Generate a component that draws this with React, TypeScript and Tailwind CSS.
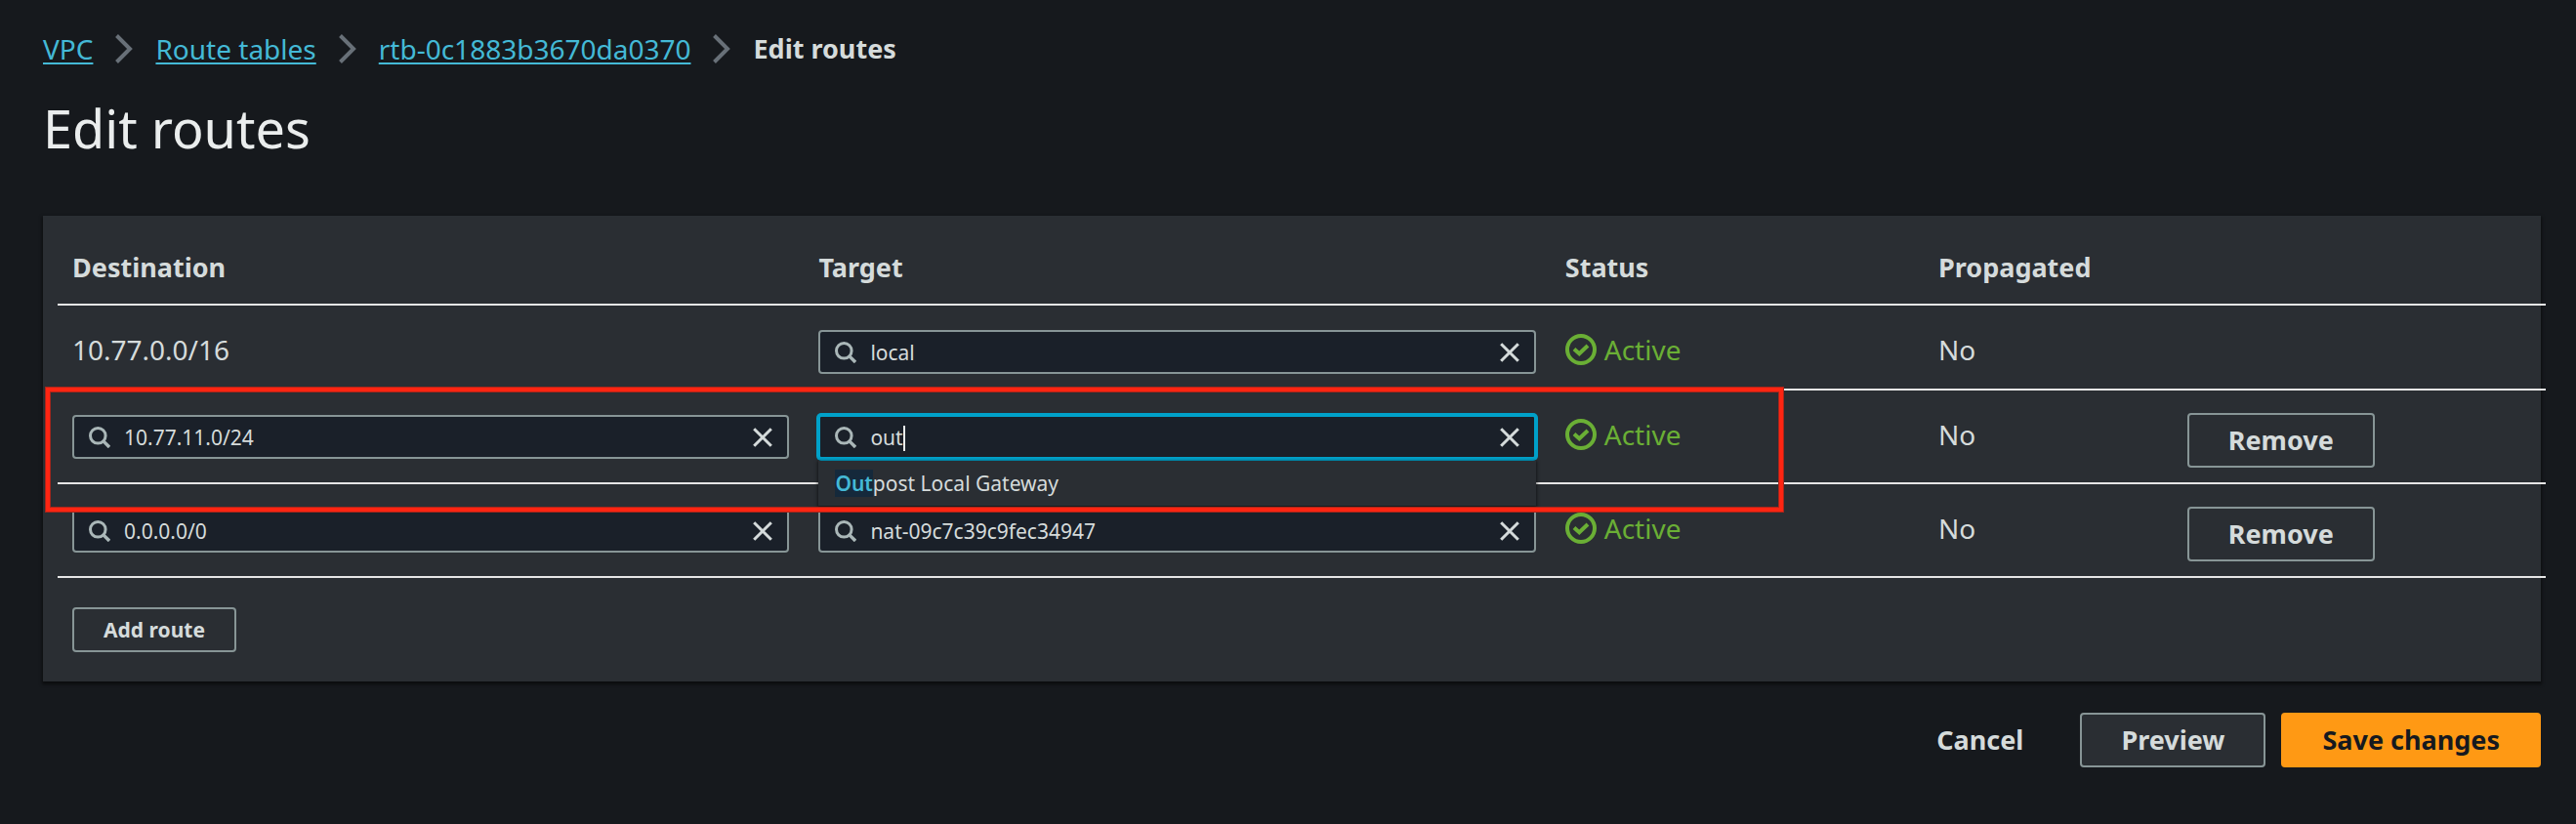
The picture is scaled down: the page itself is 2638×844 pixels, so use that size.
import { useState } from "react";

interface Route {
    id: string;
    destination: string;
    target: string;
    status: string;
    propagated: string;
    fixed?: boolean;
}

const initialRoutes: Route[] = [
    { id: "local", destination: "10.77.0.0/16", target: "local", status: "Active", propagated: "No", fixed: true },
    { id: "outpost", destination: "10.77.11.0/24", target: "out", status: "Active", propagated: "No" },
    { id: "nat", destination: "0.0.0.0/0", target: "nat-09c7c39c9fec34947", status: "Active", propagated: "No" },
];

const crumbs = ["VPC", "Route tables", "rtb-0c1883b3670da0370"];

function ChevronIcon() {
    return (
        <svg className="w-[18px] h-[30px] shrink-0" viewBox="0 0 18 30" fill="none" stroke="#687078" strokeWidth="4" aria-hidden="true">
            <path d="M1.5 1.5L15 15L1.5 28.5" />
        </svg>
    );
}

function SearchIcon() {
    return (
        <svg className="w-[22px] h-[22px] shrink-0" viewBox="0 0 22 22" fill="none" stroke="#aab7b8" strokeWidth="3" aria-hidden="true">
            <circle cx="9.3" cy="9.3" r="7.8" />
            <path d="M14.6 14.6L21 21" strokeWidth="3.4" />
        </svg>
    );
}

function CloseIcon() {
    return (
        <svg className="w-5 h-5" viewBox="0 0 20 20" fill="none" stroke="#d5dbdb" strokeWidth="3" aria-hidden="true">
            <path d="M1.2 1.2L18.8 18.8M18.8 1.2L1.2 18.8" />
        </svg>
    );
}

function CheckIcon() {
    return (
        <svg className="w-8 h-8 shrink-0" viewBox="0 0 32 32" fill="none" stroke="currentColor" strokeWidth="4" aria-hidden="true">
            <circle cx="16" cy="16" r="14" />
            <path d="M9 15.5L14.3 20.3L23 12" />
        </svg>
    );
}

interface SearchBoxProps {
    label: string;
    value: string;
    active?: boolean;
    onChange: (value: string) => void;
}

function SearchBox({ label, value, active, onChange }: SearchBoxProps) {
    return (
        <div
            className={
                active
                    ? "relative flex items-center h-[45px] px-[15px] gap-[14px] rounded-[3px] border-2 border-[#00a1c9] ring-2 ring-[#00a1c9] bg-[#1a2029]"
                    : "relative flex items-center h-[45px] px-[15px] gap-[14px] rounded-[4px] border-2 border-[#879596] bg-[#1a2029]"
            }
        >
            <SearchIcon />
            <input
                type="text"
                aria-label={label}
                value={value}
                onChange={(e) => onChange(e.target.value)}
                className="flex-1 min-w-0 bg-transparent text-[21px] leading-8 text-[#d5dbdb] outline-none"
            />
            {active && <span className="absolute left-[85px] top-[9px] w-[2px] h-[26px] bg-[#eaeded]"></span>}
            <button type="button" aria-label={`Clear ${label}`} onClick={() => onChange("")}>
                <CloseIcon />
            </button>
        </div>
    );
}

export default function App() {
    const [routes, setRoutes] = useState<Route[]>(initialRoutes);

    const updateRoute = (id: string, changes: Partial<Route>) => {
        setRoutes(routes.map((r) => (r.id === id ? { ...r, ...changes } : r)));
    };

    const removeRoute = (id: string) => {
        setRoutes(routes.filter((r) => r.id !== id));
    };

    const addRoute = () => {
        setRoutes([...routes, { id: `route-${routes.length}`, destination: "", target: "", status: "-", propagated: "No" }]);
    };

    return (
        <main className="min-h-screen bg-[#16191d] pl-[44px] pr-9 pt-7 pb-14 font-['Noto_Sans','Open_Sans',sans-serif] text-[28px] leading-9 text-[#d5dbdb]">
            {/* Breadcrumbs */}
            <nav aria-label="Breadcrumbs" className="flex items-center gap-[23px] leading-[44px]">
                {crumbs.map((crumb) => (
                    <div key={crumb} className="flex items-center gap-[23px]">
                        <a href="#" className="text-[#44b9d6] underline decoration-2 underline-offset-3">{crumb}</a>
                        <ChevronIcon />
                    </div>
                ))}
                <span className="text-[27px] font-bold">Edit routes</span>
            </nav>

            <h1 className="mt-6 text-[54px] leading-[70px] text-[#eaeded]">Edit routes</h1>

            {/* Routes */}
            <section className="mt-[55px] pl-[15px] pb-[30px] bg-[#2a2e33] shadow-[0_2px_3px_1px_rgba(0,0,0,0.5)]">
                <table className="w-[calc(100%+5px)] table-fixed border-separate border-spacing-0 text-left">
                    <colgroup>
                        <col className="w-[30%]" />
                        <col className="w-[30%]" />
                        <col className="w-[15%]" />
                        <col className="w-[10%]" />
                        <col className="w-[15%]" />
                    </colgroup>
                    <thead>
                        <tr className="h-[92px] text-[27px] *:px-[15px] *:pt-[35px] *:align-top *:font-bold *:border-b-2 *:border-[#e6e6e6]">
                            <th>Destination</th>
                            <th>Target</th>
                            <th>Status</th>
                            <th>Propagated</th>
                            <td></td>
                        </tr>
                    </thead>
                    <tbody>
                        {routes.map((route) => {
                            const active = route.id === "outpost";
                            return (
                                <tr key={route.id} className="relative *:px-[15px] *:pb-[15px] *:align-top *:border-b-2 *:border-[#e6e6e6]">
                                    {route.fixed ? (
                                        <td className="pt-[27px]">{route.destination}</td>
                                    ) : (
                                        <td className="pt-[25px]">
                                            <SearchBox
                                                label={`Destination ${route.id}`}
                                                value={route.destination}
                                                onChange={(destination) => updateRoute(route.id, { destination })}
                                            />
                                            {active && (
                                                <div className="absolute z-20 -top-[3px] -bottom-7 -left-3 w-[calc(70%-5px)] border-4 border-[#ff2512] outline outline-[#a8261b] shadow-[inset_0_0_0_1px_#a8261b] pointer-events-none"></div>
                                            )}
                                        </td>
                                    )}
                                    <td className="pt-[25px]">
                                        <div className="relative">
                                            <SearchBox
                                                label={`Target ${route.id}`}
                                                value={route.target}
                                                active={active}
                                                onChange={(target) => updateRoute(route.id, { target })}
                                            />
                                            {active && (
                                                <ul className="absolute z-10 top-[47px] inset-x-0 px-[17px] py-[7px] bg-[#2a2e33] text-[21px] leading-8 shadow-[0_1px_3px_1px_rgba(0,0,0,0.5)]">
                                                    <li>
                                                        <mark className="bg-[#15293b] font-semibold text-[#44b9d6]">Out</mark>post Local Gateway
                                                    </li>
                                                </ul>
                                            )}
                                        </div>
                                    </td>
                                    <td className="pt-[27px]">
                                        <span className="flex items-center gap-2 text-[#6aaf35]">
                                            <CheckIcon />
                                            {route.status}
                                        </span>
                                    </td>
                                    <td className="pt-[27px]">{route.propagated}</td>
                                    <td className="pt-[23px]">
                                        {!route.fixed && (
                                            <button
                                                type="button"
                                                onClick={() => removeRoute(route.id)}
                                                className="block h-14 px-10 rounded-[4px] border-2 border-[#879596] text-[27px] font-bold"
                                            >
                                                Remove
                                            </button>
                                        )}
                                    </td>
                                </tr>
                            );
                        })}
                    </tbody>
                </table>
                <button
                    type="button"
                    onClick={addRoute}
                    className="block mt-[30px] ml-[15px] h-[46px] px-[30px] rounded-[4px] border-2 border-[#879596] text-[21px] leading-8 font-bold"
                >
                    Add route
                </button>
            </section>

            {/* Form actions */}
            <div className="mt-8 flex justify-end gap-4 text-[27px] font-bold">
                <button type="button" className="h-14 px-[42px]">Cancel</button>
                <button type="button" className="h-14 px-10 rounded-[4px] border-2 border-[#879596] bg-[#2a2e33]">Preview</button>
                <button type="button" className="h-14 px-[42px] rounded-[4px] bg-[#ff9914] text-[#16191f]">Save changes</button>
            </div>
        </main>
    );
}
